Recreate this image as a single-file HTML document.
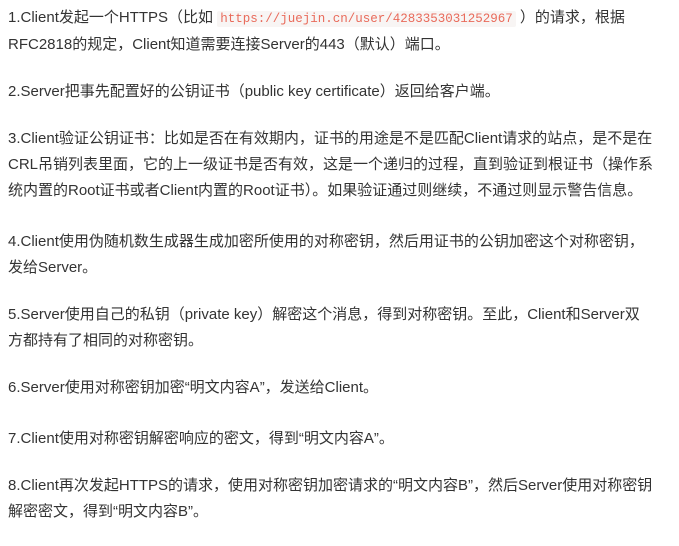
<!DOCTYPE html>
<html><head><meta charset="utf-8"><style>
body{margin:0;background:#fff;}
.c{position:absolute;left:8px;top:5px;width:670px;font-family:"Liberation Sans","Noto Sans CJK SC",sans-serif;font-size:15px;color:#333;line-height:26px;}
p{margin:0 0 21px 0;white-space:nowrap;}
code{font-family:"Liberation Mono",monospace;font-size:12.5px;color:#e96b5b;background:#f8f5f4;padding:1px 3px;border-radius:2px;}
</style></head><body><div class="c">
<p>1.Client发起一个HTTPS（比如 <code>https://juejin.cn/user/4283353031252967</code> ）的请求，根据<br>RFC2818的规定，Client知道需要连接Server的443（默认）端口。</p>
<p>2.Server把事先配置好的公钥证书（public key certificate）返回给客户端。</p>
<p>3.Client验证公钥证书：比如是否在有效期内，证书的用途是不是匹配Client请求的站点，是不是在<br>CRL吊销列表里面，它的上一级证书是否有效，这是一个递归的过程，直到验证到根证书（操作系<br>统内置的Root证书或者Client内置的Root证书）。如果验证通过则继续，不通过则显示警告信息。</p>
<p style="margin-top:25px">4.Client使用伪随机数生成器生成加密所使用的对称密钥，然后用证书的公钥加密这个对称密钥，<br>发给Server。</p>
<p>5.Server使用自己的私钥（private key）解密这个消息，得到对称密钥。至此，Client和Server双<br>方都持有了相同的对称密钥。</p>
<p>6.Server使用对称密钥加密“明文内容A”，发送给Client。</p>
<p style="margin-top:25px">7.Client使用对称密钥解密响应的密文，得到“明文内容A”。</p>
<p>8.Client再次发起HTTPS的请求，使用对称密钥加密请求的“明文内容B”，然后Server使用对称密钥<br>解密密文，得到“明文内容B”。</p>
</div></body></html>
